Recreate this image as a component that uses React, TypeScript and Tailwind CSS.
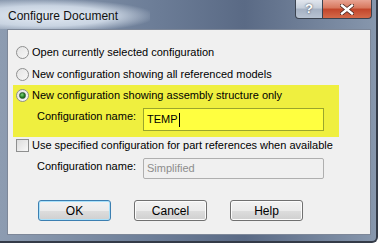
import { useState } from 'react'

const font = { fontFamily: '"Liberation Sans", Arial, sans-serif' }

function Radio({ checked }: { checked?: boolean }) {
  return (
    <div className="w-[13px] h-[13px] rounded-full border border-[#8e8f8f] bg-gradient-to-br from-[#e4e4e4] to-[#f7f7f7] flex items-center justify-center shrink-0">
      {checked && (
        <div className="w-[7px] h-[7px] rounded-full bg-[radial-gradient(circle_at_40%_35%,#7fd47f,#1f7a1f_60%,#0e4f0e)] border border-[#2c5e2c]" />
      )}
    </div>
  )
}

function Button({ label, primary }: { label: string; primary?: boolean }) {
  return (
    <div
      className={`w-[73px] h-[21px] rounded-[3px] border flex items-center justify-center text-[12px] text-black ${
        primary
          ? 'border-[#3c7fb1] shadow-[inset_0_0_0_1px_#a9e1fb]'
          : 'border-[#707070] shadow-[inset_0_0_0_1px_#fcfcfc]'
      } bg-[linear-gradient(#f2f2f2_0%,#ebebeb_50%,#dddddd_51%,#cfcfcf_100%)]`}
    >
      {label}
    </div>
  )
}

export default function App() {
  const [name] = useState('TEMP')

  return (
    <div
      className="w-[378px] h-[243px] overflow-hidden relative bg-[linear-gradient(90deg,#8d9cb1_0%,#6d7e98_40%,#5a6a85_65%,#8797ad_100%)] border-r-2 border-b-2 border-[#343b48] rounded-br-[6px]"
      style={font}
    >
      {/* title bar */}
      <div className="h-[29px] flex items-start relative">
        <div className="absolute left-0 top-0 w-[150px] h-[29px] bg-[radial-gradient(ellipse_at_30%_55%,#e3eaf3_0%,#c9d4e2_45%,rgba(141,156,177,0)_75%)]" />
        <span className="relative ml-[8px] mt-[7px] text-[12px] text-[#111]">Configure Document</span>
        <div className="absolute right-[4px] top-0 flex">
          <div className="w-[28px] h-[19px] border border-t-0 border-[#3b4350] rounded-bl-[4px] bg-[linear-gradient(#e1e6ee_0%,#c5ceda_45%,#a5b1c3_50%,#b8c3d2_100%)] flex items-center justify-center text-white font-bold text-[13px] [text-shadow:0_0_2px_#2b3340]">
            ?
          </div>
          <div className="w-[49px] h-[19px] border border-t-0 border-l-0 border-[#3b4350] rounded-br-[4px] bg-[linear-gradient(#e8a493_0%,#d7765c_45%,#c2452a_50%,#d46a4a_100%)] flex items-center justify-center">
            <svg width="14" height="11" viewBox="0 0 14 11">
              <path d="M2 1.5 L12 9.5 M12 1.5 L2 9.5" stroke="#4a2620" strokeWidth="4" strokeLinecap="square" />
              <path d="M2 1.5 L12 9.5 M12 1.5 L2 9.5" stroke="#ffffff" strokeWidth="2.4" strokeLinecap="square" />
            </svg>
          </div>
        </div>
      </div>

      {/* client area */}
      <div className="ml-[7px] w-[364px] h-[206px] border border-[#7d8798] bg-[#f0f0f0] flex flex-col text-[11px] text-black whitespace-nowrap">
        <div className="mt-[14px] h-[16px] pl-[8px] flex items-center gap-[3px]">
          <Radio />
          <span>Open currently selected configuration</span>
        </div>
        <div className="mt-[6px] h-[16px] pl-[8px] flex items-center gap-[3px]">
          <Radio />
          <span>New configuration showing all referenced models</span>
        </div>

        <div className="mt-[3px] ml-[5px] w-[326px] h-[52px] bg-[#efef3f] flex flex-col">
          <div className="mt-[2px] h-[16px] pl-[3px] flex items-center gap-[3px]">
            <Radio checked />
            <span>New configuration showing assembly structure only</span>
          </div>
          <div className="mt-[5px] flex items-start">
            <span className="ml-[24px] w-[106px] leading-[16px]">Configuration name:</span>
            <div className="w-[181px] h-[23px] border border-[#9aa52c] bg-[#ffff40] flex items-center pl-[3px]">
              <span>{name}</span>
              <span className="w-px h-[14px] bg-black ml-[1px]" />
            </div>
          </div>
        </div>

        <div className="h-[16px] pl-[8px] flex items-center gap-[3px]">
          <div className="w-[13px] h-[13px] border border-[#8e8f8f] bg-gradient-to-br from-[#dcdcdc] to-[#f8f8f8] shrink-0" />
          <span>Use specified configuration for part references when available</span>
        </div>
        <div className="mt-[5px] flex items-start">
          <span className="ml-[29px] w-[106px] leading-[16px]">Configuration name:</span>
          <div className="w-[181px] h-[21px] border border-[#afafaf] rounded-[2px] bg-[#f0f0f0] flex items-center pl-[3px] text-[#8d8d8d]">
            Simplified
          </div>
        </div>

        <div className="mt-[21px] ml-[30px] flex gap-[23px]">
          <Button label="OK" primary />
          <Button label="Cancel" />
          <Button label="Help" />
        </div>
      </div>
    </div>
  )
}
